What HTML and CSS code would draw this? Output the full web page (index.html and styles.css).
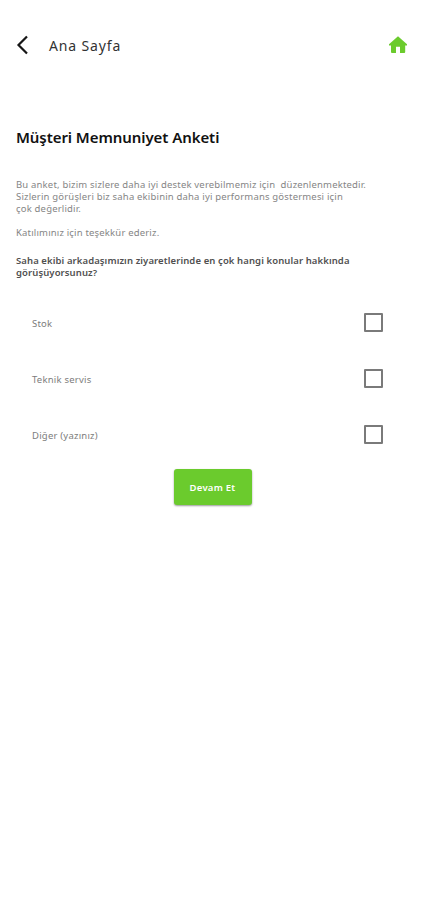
FILE: index.html
```html
<!DOCTYPE html>
<html lang="tr">
<head>
<meta charset="utf-8">
<meta name="viewport" content="width=device-width, initial-scale=1">
<title>Müşteri Memnuniyet Anketi</title>
<link rel="stylesheet" href="styles.css">
</head>
<body>
<header class="topbar">
  <svg class="back" viewBox="0 0 14 20" width="14" height="20"><path d="M11 1.500 2.500 10l8.500 8.500" fill="none" stroke="#161616" stroke-width="2.200"/></svg>
  <span class="topbar-title">Ana Sayfa</span>
  <svg class="home" viewBox="0 0 20 20" width="20" height="20"><path d="M10 1.200 19 9.300v1.200h-1.800V17a1 1 0 0 1-1 1H12v-6.300H8V18H4a1 1 0 0 1-1-1v-6.500H1V9.300z" fill="#6bcb2d"/></svg>
</header>
<main>
  <h1>Müşteri Memnuniyet Anketi</h1>
  <p class="intro">Bu anket, bizim sizlere daha iyi destek verebilmemiz için&nbsp; düzenlenmektedir.<br>Sizlerin görüşleri biz saha ekibinin daha iyi performans göstermesi için<br>çok değerlidir.</p>
  <p class="thanks">Katılımınız için teşekkür ederiz.</p>
  <h2>Saha ekibi arkadaşımızın ziyaretlerinde en çok hangi konular hakkında<br>görüşüyorsunuz?</h2>
  <div class="options">
    <div class="option"><span class="label">Stok</span><i class="box"></i></div>
    <div class="option"><span class="label">Teknik servis</span><i class="box"></i></div>
    <div class="option"><span class="label">Diğer (yazınız)</span><i class="box"></i></div>
  </div>
  <button class="submit">Devam Et</button>
</main>
</body>
</html>
```
FILE: styles.css
```css
* { box-sizing: border-box; }
body {
  margin: 0;
  min-height: 900px;
  background: #fff;
  font-family: "Noto Sans", sans-serif;
}
.topbar {
  display: flex;
  align-items: center;
  height: 90px;
  padding: 0 17px 0 16px;
}
.topbar-title {
  margin-left: 19px;
  font-size: 14px;
  letter-spacing: 0.85px;
  color: #333;
}
.home { margin-left: auto; }
main {
  display: flex;
  flex-direction: column;
  padding: 37px 16px 0;
  white-space: nowrap;
}
h1 {
  margin: 0;
  font-size: 15px;
  line-height: 20px;
  letter-spacing: -0.07px;
  font-weight: 600;
  color: #111;
}
p, h2 {
  margin: 0;
  font-size: 9.5px;
  line-height: 12px;
  letter-spacing: 0.18px;
}
p { color: #858585; }
.intro { margin-top: 32px; }
.thanks { margin-top: 12px; }
h2 {
  margin-top: 16px;
  font-weight: 600;
  letter-spacing: 0.1px;
  color: #505050;
}
.options { margin-top: 15px; }
.option {
  display: flex;
  align-items: center;
  justify-content: space-between;
  height: 56px;
  padding: 0 26px 0 16px;
  font-size: 9.5px;
  letter-spacing: 0.22px;
  color: #7c7c7c;
}
.label { padding-top: 2px; }
.box {
  width: 19px;
  height: 19px;
  border: 2px solid #7a7a7a;
  border-radius: 1px;
}
.submit {
  align-self: center;
  width: 78px;
  height: 36px;
  margin-top: 7px;
  padding: 0;
  border: 0;
  border-radius: 3px;
  background: #6bcb2d;
  box-shadow: 0 1px 2px rgba(0, 0, 0, 0.4);
  font: 600 9.5px "Noto Sans", sans-serif;
  letter-spacing: 0.25px;
  color: #fff;
}
```
